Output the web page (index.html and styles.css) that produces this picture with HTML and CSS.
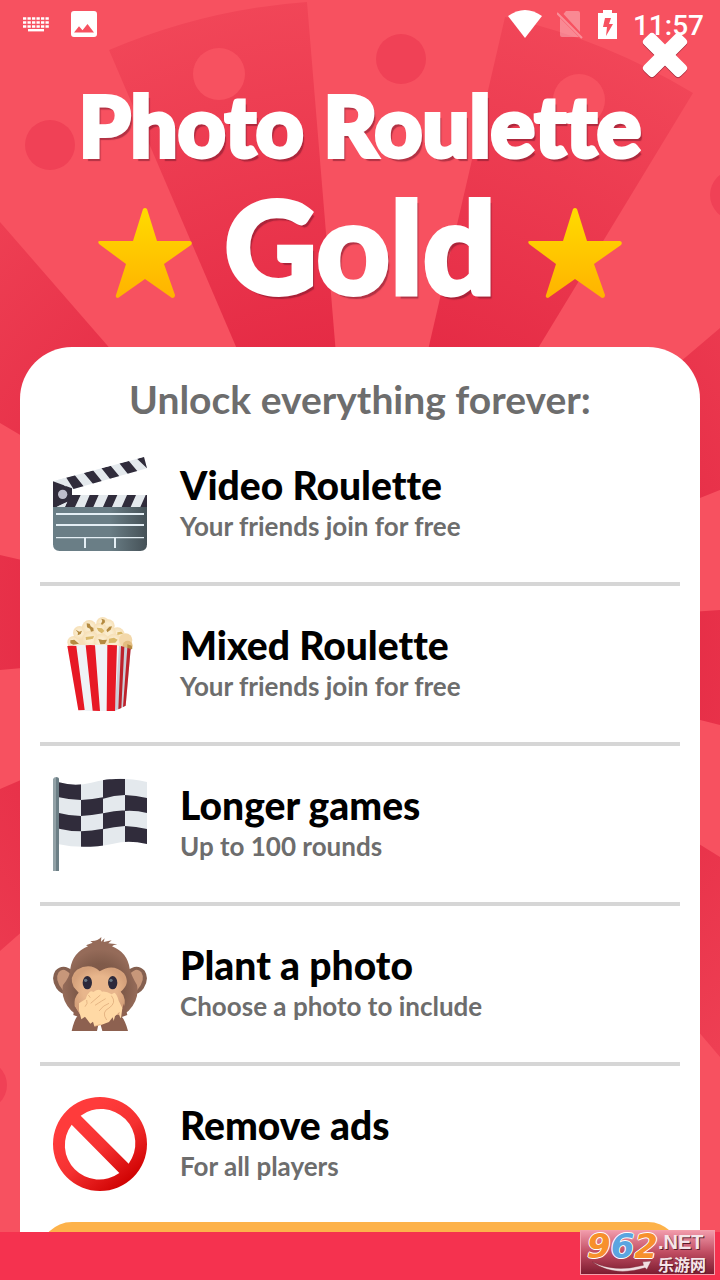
FILE: index.html
```html
<!DOCTYPE html>
<html lang="en">
<head>
<meta charset="utf-8">
<meta name="viewport" content="width=device-width, initial-scale=1">
<title>Photo Roulette Gold</title>
<link rel="stylesheet" href="styles.css">
</head>
<body>
<div class="screen">
  <svg class="wheel" viewBox="0 0 720 1280" preserveAspectRatio="xMidYMin slice" aria-hidden="true">
    <defs>
      <radialGradient id="wedge" gradientUnits="userSpaceOnUse" cx="360" cy="634" r="640">
        <stop offset="0.45" stop-color="#e52b45"/>
        <stop offset="1" stop-color="#f14658"/>
      </radialGradient>
    </defs>
    <g fill="url(#wedge)">
      <path d="M109 50Q205 9 307 2L359 634Z"/>
      <path d="M505 17Q604 39 693 93L361 640Z"/>
      <path d="M0 222L360 636L0 423Z"/>
      <path d="M0 555L360 638L0 670Z"/>
      <path d="M0 789L360 634L0 951Z"/>
      <path d="M720 328L360 634L720 490Z"/>
      <path d="M720 610L360 634L720 725Z"/>
      <path d="M720 857L360 634L720 1057Z"/>
    </g>
    <g fill="#f04156">
      <circle cx="50" cy="145" r="25"/>
      <circle cx="401" cy="59" r="25"/>
      <circle cx="735" cy="195" r="25"/>
      <circle cx="-18" cy="1085" r="25"/>
    </g>
    <g fill="#f75160">
      <circle cx="219" cy="74" r="26"/>
      <circle cx="579" cy="100" r="26"/>
    </g>
  </svg>

  <div class="status">
    <div class="status-group">
      <svg width="28" height="28" viewBox="0 0 28 28" fill="none" stroke="#fff" aria-hidden="true">
        <path d="M1 8.500h27M1 12.500h27M1 16.500h27" stroke-width="2.600" stroke-dasharray="3.300 1.200"/>
        <path d="M6 20.200h16" stroke-width="2.400"/>
      </svg>
      <svg width="26" height="26" viewBox="0 0 26 26" aria-hidden="true">
        <path fill="#fff" fill-rule="evenodd" d="M3 0h20q3 0 3 3v20q0 3-3 3H3q-3 0-3-3V3q0-3 3-3zM3 21.500h20l-6.500-8.500-5 6.300-3.500-4z"/>
      </svg>
    </div>
    <div class="status-group status-right">
      <svg width="34" height="28" viewBox="0 0 34 28" aria-hidden="true"><path fill="#fff" d="M0 6Q17-6 34 6L17 28Z"/></svg>
      <svg width="26" height="29" viewBox="0 0 26 29" aria-hidden="true">
        <path fill="#fff" opacity=".32" d="M9 1h12q2 0 2 2v19L6.500 4zM3 8l19 19H5q-2 0-2-2z"/>
        <path stroke="#fff" opacity=".35" stroke-width="2" d="M0 3L25 28"/>
      </svg>
      <svg width="20" height="29" viewBox="0 0 20 29" aria-hidden="true"><path fill="#fff" fill-rule="evenodd" d="M5 0h9v3h5v26H0V3h5zM7 8L5 17h4l-1 9 7-12h-4l2-6z"/></svg>
      <span class="time">11:57</span>
    </div>
  </div>
  <button class="close" type="button" aria-label="Close">
    <svg width="46" height="47" viewBox="0 0 46 47" aria-hidden="true">
      <g fill="#a82b3c">
        <rect x="-3" y="16.500" width="52" height="15" rx="4" transform="rotate(45 23 24)"/>
        <rect x="-3" y="16.500" width="52" height="15" rx="4" transform="rotate(-45 23 24)"/>
      </g>
      <g fill="#fff">
        <rect x="-3" y="15.500" width="52" height="15" rx="4" transform="rotate(45 23 23)"/>
        <rect x="-3" y="15.500" width="52" height="15" rx="4" transform="rotate(-45 23 23)"/>
      </g>
    </svg>
  </button>

  <main class="content">
    <h1 class="title">
      <span class="title-top">Photo Roulette</span>
      <span class="title-gold">
        <svg class="star" viewBox="0 0 94 90" aria-hidden="true">
          <defs><linearGradient id="gold" x2="0" y2="1"><stop stop-color="#ffdb00"/><stop offset="1" stop-color="#ffb300"/></linearGradient></defs>
          <path fill="url(#gold)" d="M45 1q2-2 4 0l10 32h33q3 1 1 4L66 56l11 31q0 3-3 3L47 71 20 90q-3 0-2-3l10-31L1 36q-2-3 1-3h33z"/>
        </svg>
        <span class="gold-word">Gold</span>
        <svg class="star" viewBox="0 0 94 90" aria-hidden="true">
          <path fill="url(#gold)" d="M45 1q2-2 4 0l10 32h33q3 1 1 4L66 56l11 31q0 3-3 3L47 71 20 90q-3 0-2-3l10-31L1 36q-2-3 1-3h33z"/>
        </svg>
      </span>
    </h1>

    <section class="card">
      <h2 class="card-title">Unlock everything forever:</h2>
      <ul class="perks">
        <li class="perk">
          <svg class="perk-icon" viewBox="39 51 282 282" aria-hidden="true">
            <defs>
              <linearGradient id="slate"><stop offset=".6" stop-color="#6a7e86"/><stop offset="1" stop-color="#455157"/></linearGradient>
              <clipPath id="arm"><path d="M39 124L312 51L321 85L98 148L92 141L39 124Z"/></clipPath>
              <clipPath id="bar"><path d="M39 165H321V202H39Z"/></clipPath>
            </defs>
            <path fill="url(#slate)" d="M39 200H321V313Q321 333 301 333H59Q39 333 39 313Z"/>
            <path fill="#e4e9ed" d="M39 124L312 51L321 85L98 148ZM39 165H321V201H39Z"/>
            <g fill="#302c3b" clip-path="url(#arm)">
              <path d="M78 112L104 105L132 140L102 149ZM131 98L159 91L187 125L160 133ZM184 84L212 77L240 111L212 119ZM238 70L266 62L295 97L266 105ZM291 56L315 49L323 87Z"/>
            </g>
            <g fill="#302c3b" clip-path="url(#bar)">
              <path d="M91 165H122L105 201H74ZM149 165H176L160 201H134ZM205 165H232L216 201H189ZM261 165H288L272 201H245ZM317 165H344L328 201H301Z"/>
            </g>
            <path fill="#302c3b" d="M39 124L96 145V166L84 186L50 201H39Z"/>
            <path fill="#e4e9ed" d="M53 120L78 140Q72 133 82 137L72 115ZM50 200L82 185L75 201Z"/>
            <circle cx="68" cy="163" r="14" fill="#bdbdcb"/>
            <path fill="none" stroke="#e4eef4" stroke-width="6" d="M48 222H312M48 255H312"/>
            <path fill="none" stroke="#e4eef4" stroke-width="4" d="M48 293H312"/>
            <path fill="none" stroke="#e4eef4" stroke-width="6" d="M135 293V324M225 293V324"/>
          </svg>
          <div class="perk-text"><h3>Video Roulette</h3><p>Your friends join for free</p></div>
        </li>
        <li class="perk">
          <svg class="perk-icon" viewBox="39 36 282 282" aria-hidden="true">
            <defs><radialGradient id="corn"><stop offset=".4" stop-color="#fbedcf"/><stop offset="1" stop-color="#f6dfb6"/></radialGradient></defs>
            <path fill="#f6dfb6" d="M84 122L110 85L188 50L230 85L275 125L250 140H90Z"/>
            <g fill="url(#corn)">
              <circle cx="101" cy="112" r="19"/><circle cx="119" cy="83" r="20"/><circle cx="148" cy="67" r="22"/><circle cx="188" cy="55" r="19"/><circle cx="205" cy="62" r="19"/><circle cx="180" cy="76" r="22"/><circle cx="232" cy="89" r="22"/><circle cx="207" cy="85" r="21"/><circle cx="151" cy="102" r="24"/><circle cx="185" cy="110" r="24"/><circle cx="222" cy="110" r="24"/>
            </g>
            <circle cx="257" cy="105" r="20" fill="#f3d8aa"/><circle cx="263" cy="122" r="15" fill="#e3bd80"/>
            <g fill="#b48a40">
              <path d="M107 74l11 6 8-3-4 10-9 4 1-8zM140 55l9 1 3 8 8 5 1 9-8 2-3-9-9-4zM184 41l10 3 1 8-9 8-3-4 4-8zM199 75l9-10 8-1-4 10-10 8zM175 102l13 3 13-1-6 13-14 1zM91 106l12-2 14 12-17 3-9-4zM262 118l13 4 2 9-10 5-5-7z"/>
              <path fill="#d9b869" d="M137 96l25-3-3 8-21 4zM170 68l16 2 7 8-8 7-10-7zM207 101l15-3 11 6-7 9-20 1zM232 82l12-2 5 6-17 4z"/>
            </g>
            <path fill="#eff3f6" d="M82 123Q155 116 245 123L226 318Q165 322 115 315Z"/>
            <path fill="#c9ced8" d="M237 122Q254 126 272 133L257 302L224 318Z"/>
            <path fill="#e71925" d="M82 123Q96 121 109 123L134 315L115 316ZM137 121Q151 119 165 121L180 318L158 317ZM202 120Q218 119 231 121L225 318H200Z"/>
            <path fill="#bd222c" d="M243 123L253 126L244 309L235 313ZM262 128L272 132L257 302L249 306Z"/>
          </svg>
          <div class="perk-text"><h3>Mixed Roulette</h3><p>Your friends join for free</p></div>
        </li>
        <li class="perk">
          <svg class="perk-icon" viewBox="39 36 282 282" aria-hidden="true">
            <defs><clipPath id="flag"><path d="M57 52Q105 66 154 53T215 43Q260 38 321 51V237Q265 224 220 236Q130 254 57 238Z"/></clipPath></defs>
            <path fill="#e4e9ed" d="M57 52Q105 66 154 53T215 43Q260 38 321 51V237Q265 224 220 236Q130 254 57 238Z"/>
            <g fill="#302c3b" clip-path="url(#flag)">
              <path d="M57 40H123V105Q90 105 57 97ZM189 35H255V90Q222 91 189 101ZM123 105Q158 103 189 97V145Q155 151 123 153ZM255 90Q289 91 321 99V144Q289 136 255 138ZM57 144Q90 153 123 153V199Q90 199 57 191ZM189 145Q222 137 255 136V183Q222 185 189 193ZM123 199Q155 197 189 191V246H123ZM255 183Q288 184 321 192V246H255Z"/>
            </g>
            <path fill="#92a1a6" d="M39 318V42Q42 36 49 36Q57 38 57 42V318Z"/>
            <path fill="#6c7f86" d="M48 37Q57 38 57 42V318H48Z"/>
          </svg>
          <div class="perk-text"><h3>Longer games</h3><p>Up to 100 rounds</p></div>
        </li>
        <li class="perk">
          <svg class="perk-icon" viewBox="39 36 282 282" aria-hidden="true">
            <defs>
              <radialGradient id="fur" cy=".65"><stop stop-color="#795142"/><stop offset=".65" stop-color="#805b4a"/><stop offset="1" stop-color="#956b59"/></radialGradient>
              <radialGradient id="face"><stop offset=".6" stop-color="#e8b68c"/><stop offset="1" stop-color="#d5a17b"/></radialGradient>
            </defs>
            <path fill="#856050" d="M100 139Q70 113 46 137Q31 161 49 190Q66 215 99 207ZM260 139Q290 113 314 137Q329 161 311 190Q294 215 261 207Z"/>
            <path fill="#c7977a" d="M91 148Q70 124 56 142Q42 164 68 195Q92 188 91 148ZM269 148Q290 124 304 142Q318 164 292 195Q268 188 269 148Z"/>
            <path fill="url(#fur)" d="M138 61L158 53L151 48Q172 50 184 36L183 50L194 40L191 51L215 46L205 55L232 58Q220 59 216 64Q262 82 269 131Q275 153 291 180Q299 223 266 257Q237 284 180 280Q123 284 94 257Q61 223 69 180Q91 153 91 131Q98 83 144 64Z"/>
            <path fill="#8d6150" d="M119 270Q106 270 95 318H171L178 285L187 318H264Q254 280 239 269L179 246Z"/>
            <path fill="url(#face)" d="M179 139Q151 112 111 134Q86 155 101 186L116 203Q101 217 104 244L120 270H240Q263 239 250 211L242 200Q273 176 252 145Q219 113 179 139Z"/>
            <path fill="#8d6150" d="M104 244L120 270L130 285H230L240 270L252 235L262 270L180 300L100 270Z"/>
            <ellipse cx="142" cy="173" rx="14" ry="20" fill="#2d293a"/><ellipse cx="218" cy="173" rx="14" ry="20" fill="#2d293a"/>
            <circle cx="137" cy="166" r="5" fill="#687784"/><circle cx="213" cy="166" r="5" fill="#687784"/>
            <path fill="#ffd9a5" d="M117 235L137 222Q138 211 149 201Q153 197 160 201Q174 191 182 196L186 200Q199 198 215 208L223 203Q231 207 236 227L247 249L243 280Q235 273 239 260L225 274L221 288L218 277L207 291L181 301L163 304L159 290L151 296L135 275L124 283L117 257Z"/>
            <path fill="none" stroke="#e0ad7d" stroke-width="2.500" d="M135 245Q145 235 140 225M145 210L151 218M152 235L181 210M165 241Q188 226 197 221M177 258Q190 240 207 235M200 285Q183 261 207 249Q231 233 214 212M164 304L182 298"/>
          </svg>
          <div class="perk-text"><h3>Plant a photo</h3><p>Choose a photo to include</p></div>
        </li>
        <li class="perk">
          <svg class="perk-icon" viewBox="39 36 282 282" aria-hidden="true">
            <defs><linearGradient id="red" gradientUnits="userSpaceOnUse" x1="125" y1="95" x2="275" y2="290"><stop stop-color="#ff3b3b"/><stop offset=".45" stop-color="#f53131"/><stop offset="1" stop-color="#ce0000"/></linearGradient></defs>
            <path fill="url(#red)" fill-rule="evenodd" d="M180 36A141 141 0 1 1 180 318A141 141 0 1 1 180 36ZM122 92L266 236A103 103 0 0 0 122 92ZM95 119A103 103 0 0 0 238 264Z"/>
          </svg>
          <div class="perk-text"><h3>Remove ads</h3><p>For all players</p></div>
        </li>
      </ul>
      <button class="buy" type="button" aria-label="Unlock everything"></button>
    </section>
  </main>
  <div class="nav-bar"></div>

  <div class="watermark">
    <div class="mark-left">
      <span class="mark-number">9<span class="blue">6</span>2</span>
      <svg class="swoosh" viewBox="0 0 70 14" aria-hidden="true"><path fill="#f1dfe2" stroke="#7d2e3b" stroke-width=".5" d="M0 1Q26 14 60 5L59 1L69 0L64 10L62 8Q25 19 0 1Z"/></svg>
    </div>
    <div class="mark-right"><span class="mark-net">.NET</span><span class="mark-cjk" lang="zh">乐游网</span></div>
  </div>
</div>
</body>
</html>
```
FILE: styles.css
```css
* { box-sizing: border-box; }

body,
h1,
h2,
h3,
p,
ul {
  margin: 0;
  padding: 0;
}

button {
  border: 0;
  padding: 0;
  background: none;
}

.screen {
  position: relative;
  display: flex;
  flex-direction: column;
  height: 100vh;
  overflow: hidden;
  background: #f75160;
  font-family: Lato, "Open Sans", sans-serif;
  font-variant-ligatures: none;
}

.wheel {
  position: absolute;
  inset: 0;
  width: 100%;
  height: 100%;
}

.status {
  position: relative;
  display: flex;
  flex: none;
  justify-content: space-between;
  align-items: center;
  height: 48px;
  padding: 0 16px 0 22px;
  color: #fff;
}

.status-group {
  display: flex;
  align-items: center;
  gap: 21px;
}

.status-right { gap: 15px; }

.time {
  padding-top: 3px;
  font: 500 28px/28px Roboto, sans-serif;
}

.close {
  position: absolute;
  top: 32px;
  right: 32px;
  z-index: 1;
  height: 47px;
}

.content {
  position: relative;
  flex: 1;
  min-height: 0;
  padding: 0 20px;
  overflow: hidden;
}

.title {
  height: 299px;
  padding-top: 27px;
  color: #fff;
  font-weight: 900;
  text-align: center;
  text-shadow: 3px 4px 1px rgba(110, 20, 40, 0.5);
  -webkit-text-stroke: 4px #fff;
}

.title-top {
  display: block;
  font-size: 83px;
  line-height: 100px;
}

.title-gold {
  display: flex;
  justify-content: center;
  align-items: center;
  gap: 32px;
  font-size: 128px;
  line-height: 140px;
}

.gold-word { padding-bottom: 8px; }

.star {
  width: 94px;
  height: 90px;
  margin-top: 8px;
}

.card {
  padding: 28px 20px 0;
  border-radius: 52px 52px 0 0;
  background: #fff;
}

.card-title {
  padding-bottom: 3px;
  color: #6d6d6d;
  font-size: 39px;
  font-weight: 700;
  line-height: 48px;
  text-align: center;
}

.perks { list-style: none; }

.perk {
  display: flex;
  align-items: center;
  gap: 33px;
  height: 160px;
  padding-left: 13px;
  border-bottom: 4px solid #d6d6d6;
}

.perk:last-child {
  height: 156px;
  border-bottom: 0;
}

.perk-icon {
  flex: none;
  width: 94px;
  height: 94px;
}

.perk-text h3 {
  color: #000;
  font-size: 39px;
  font-weight: 900;
  line-height: 42px;
}

.perk-text p {
  padding-top: 2px;
  color: #6d6d6d;
  font-size: 26px;
  font-weight: 700;
  line-height: 36px;
}

.buy {
  display: block;
  width: 100%;
  height: 100px;
  border-radius: 32px;
  background: #fdb24a;
}

.nav-bar {
  position: relative;
  flex: none;
  height: 48px;
  background: #f5324f;
}

.watermark {
  position: absolute;
  right: 5px;
  bottom: 5px;
  display: flex;
  width: 135px;
  height: 45px;
  padding-left: 6px;
  border: 1px solid #f3a0ac;
  background: linear-gradient(#f19aaa, #c04c61 50%, #7c1c30);
}

.mark-left {
  display: flex;
  flex-direction: column;
}

.mark-number {
  color: #f7902c;
  font: italic 700 34px/30px "DejaVu Sans", sans-serif;
  text-shadow: 1px 0 #fff, -1px 0 #fff, 0 1px #fff, 0 -1px #fff;
}

.mark-number .blue { color: #5ba5e0; }

.swoosh {
  width: 70px;
  height: 12px;
}

.mark-right {
  display: flex;
  flex-direction: column;
  color: #f5e6e9;
  text-shadow: 1px 1px #5c1c2a;
}

.mark-net {
  font: 700 20px/22px "Liberation Sans", sans-serif;
}

.mark-cjk {
  font: 700 16px/22px "Noto Sans CJK SC", sans-serif;
}
```
